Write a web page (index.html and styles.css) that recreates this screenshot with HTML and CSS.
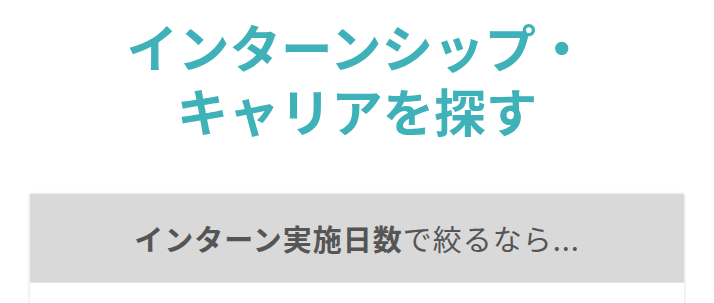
FILE: index.html
```html
<!DOCTYPE html>
<html lang="ja">
<head>
<meta charset="utf-8">
<link rel="stylesheet" href="styles.css">
</head>
<body>
<div class="page">
  <h1 class="title">インターンシップ・<br>キャリアを探す</h1>
  <section class="card">
    <div class="card-head"><strong>インターン実施日数</strong>で絞るなら...</div>
    <div class="card-body"></div>
  </section>
</div>
</body>
</html>
```
FILE: styles.css
```css
html, body {
  margin: 0;
  padding: 0;
  background: #fff;
}
.page {
  font-family: "Noto Sans CJK JP", "Noto Sans", sans-serif;
  padding: 14px 30px 0;
}
.title {
  margin: 0;
  text-align: center;
  color: #3fb1b8;
  font-size: 51.5px;
  font-weight: 700;
  line-height: 64px;
}
.card {
  margin-top: 52px;
  background: #fff;
  box-shadow: 0 0 3px rgba(0, 0, 0, 0.18);
}
.card-head {
  height: 88px;
  background: #d9d9d9;
  display: flex;
  align-items: center;
  justify-content: center;
  color: #555;
  font-size: 29px;
  font-weight: 400;
  letter-spacing: 1px;
}
.card-head strong {
  font-weight: 700;
}
.card-body {
  height: 60px;
  border-top: 1px solid #e6e6e6;
}
```
